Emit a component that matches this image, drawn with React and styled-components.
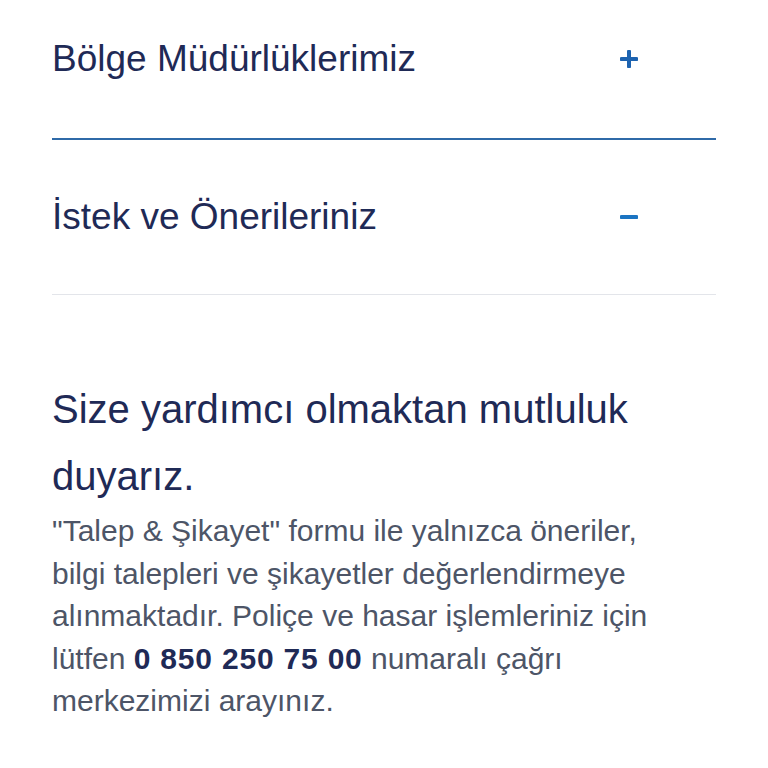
import React from "react";
import styled, { createGlobalStyle } from "styled-components";

const Global = createGlobalStyle`
  html, body { margin: 0; padding: 0; background: #fff; }
  body { font-family: "Liberation Sans", Arial, sans-serif; -webkit-font-smoothing: antialiased; }
`;

const Page = styled.div`
  width: 768px;
  padding: 0 52px;
  box-sizing: border-box;
`;

const Item = styled.div`
  display: flex;
  align-items: center;
  justify-content: space-between;
  height: ${p => p.$h}px;
  padding-bottom: ${p => p.$pb || 0}px;
  border-bottom: ${p => (p.$open ? "1px solid #e3e5ea" : "2px solid #2f6aa8")};
  box-sizing: border-box;
`;

const Title = styled.span`
  font-size: 37px;
  font-weight: 400;
  color: #1f2a56;
`;

const Toggle = styled.span`
  width: 18px;
  height: 18px;
  margin-right: 78px;
  display: flex;
  align-items: center;
  justify-content: center;
`;

const Text = styled.div`
  max-width: 618px;
`;

const Heading = styled.h2`
  margin: 81px 0 0;
  font-size: 40px;
  font-weight: 400;
  line-height: 67px;
  color: #1f2a56;
`;

const Para = styled.p`
  margin: 0;
  font-size: 30px;
  line-height: 42.5px;
  color: #4d5567;
  strong { font-weight: 700; color: #1f2a56; letter-spacing: 0.8px; }
`;

const Plus = () => (
  <svg width="18" height="18" viewBox="0 0 18 18">
    <path d="M9 1.5v15M1.5 9h15" stroke="#1d63b0" strokeWidth="4" strokeLinecap="round" />
  </svg>
);
const Minus = () => (
  <svg width="18" height="18" viewBox="0 0 18 18">
    <path d="M1.5 9h15" stroke="#1b74c2" strokeWidth="4" strokeLinecap="round" />
  </svg>
);

export default function App() {
  return (
    <Page>
      <Global />
      <Item $h={140} $pb={20}>
        <Title>Bölge Müdürlüklerimiz</Title>
        <Toggle><Plus /></Toggle>
      </Item>
      <Item $h={155} $open>
        <Title>İstek ve Önerileriniz</Title>
        <Toggle><Minus /></Toggle>
      </Item>
      <Text>
        <Heading>Size yardımcı olmaktan mutluluk duyarız.</Heading>
        <Para>
          "Talep &amp; Şikayet" formu ile yalnızca öneriler, bilgi talepleri ve şikayetler değerlendirmeye
          alınmaktadır. Poliçe ve hasar işlemleriniz için lütfen <strong>0 850 250 75 00</strong> numaralı
          çağrı merkezimizi arayınız.
        </Para>
      </Text>
    </Page>
  );
}
